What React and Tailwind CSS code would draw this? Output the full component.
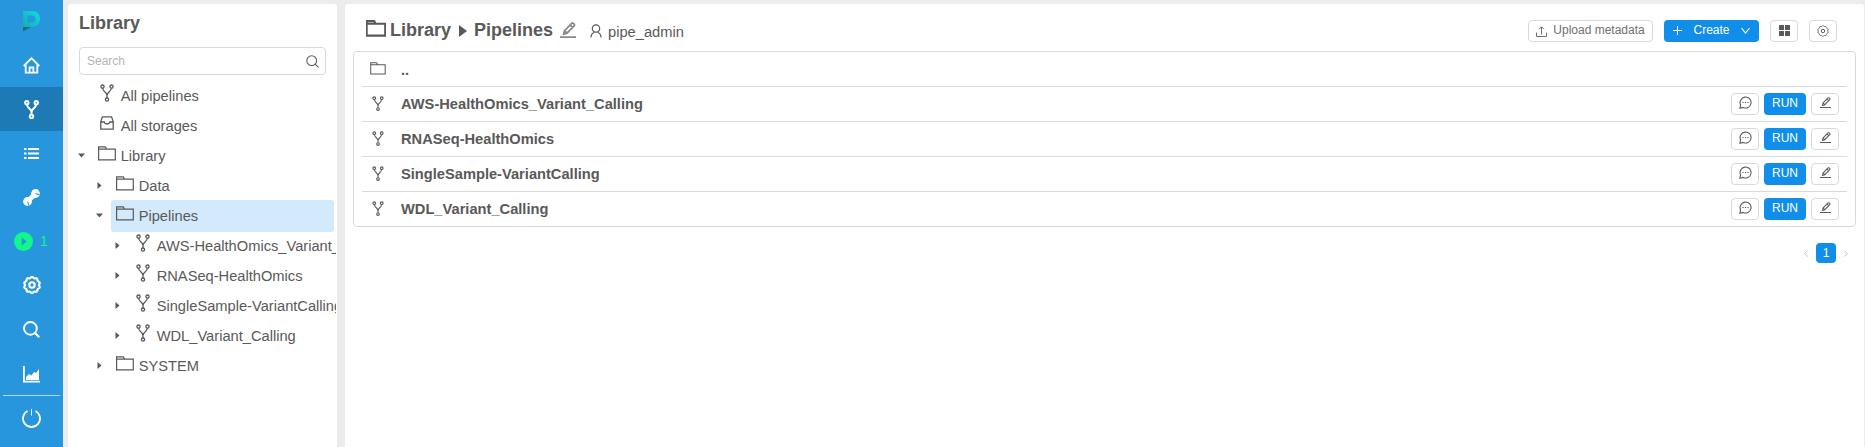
import React from "react";

const scallop = (c, r, a, n) => {
  const pts = [];
  for (let i = 0; i < 120; i++) {
    const t = (i / 120) * Math.PI * 2;
    const q = r + a * Math.cos(n * t);
    pts.push(`${(c + q * Math.sin(t)).toFixed(2)} ${(c - q * Math.cos(t)).toFixed(2)}`);
  }
  return `M${pts.join("L")}Z`;
};

function Svg({ w, h, vb, sw = 1, className = "", children }) {
  return (
    <svg
      width={w}
      height={h}
      viewBox={vb || `0 0 ${w} ${h}`}
      fill="none"
      stroke="currentColor"
      strokeWidth={sw}
      className={`block shrink-0 ${className}`}
    >
      {children}
    </svg>
  );
}

const Fork = ({ w = 14, h = 18, sw = 1.3, className }) => (
  <Svg w={w} h={h} vb="0 0 14 18" sw={sw} className={className}>
    <circle cx="2.5" cy="2.6" r="1.6" />
    <circle cx="11.5" cy="2.6" r="1.6" />
    <circle cx="7" cy="15.6" r="1.6" />
    <path d="M2.7 4.2C2.9 8 7 8.2 7 11.6V14M11.3 4.2C11.1 8 7 8.2 7 11.6" />
  </Svg>
);

const Folder = ({ w = 18, h = 15, sw = 1.2, className }) => (
  <Svg w={w} h={h} vb="0 0 18 15" sw={sw} className={className}>
    <path d="M.6 13.9V.9H7.4L8.6 3.2H17.3V13.9ZM.6 3.2H8.6" />
  </Svg>
);

const Storage = () => (
  <Svg w={14} h={14} sw={1.3}>
    <path d="M.8 5.5L2.4.8H11.6L13.2 5.5V13.2H.8ZM.8 6H4.2C4.5 7.2 5.6 8 7 8S9.5 7.2 9.8 6H13.2" />
  </Svg>
);

const Pencil = ({ s = 16, sw = 1, className }) => (
  <Svg w={s} h={s} vb="0 0 16 16" sw={sw} className={className}>
    <path d="M0 15.2H16M3.6 12.2L4.4 8.8L11.6 1.4Q12.5.6 13.4 1.4L14.1 2.1Q14.9 3 14.1 3.9L7 11.2ZM10.4 3L12.6 5.2M4.6 9L6.8 11" />
  </Svg>
);

const Gear = ({ s, sw, inner = 2, className }) => (
  <Svg w={s} h={s} vb="0 0 16 16" sw={sw} className={className}>
    <path d={scallop(8, 6.7, 0.45, 10)} />
    <circle cx="8" cy="8" r={inner} />
  </Svg>
);

const Search = ({ s, sw, className }) => (
  <Svg w={s} h={s} vb="0 0 16 16" sw={sw} className={className}>
    <circle cx="7" cy="7" r="6" />
    <path d="M11.3 11.3L15.3 15.3" />
  </Svg>
);

const Comment = () => (
  <Svg w={13} h={13} sw={1.1} className="relative -top-[2px]">
    <path d="M1.6 8.9A5.5 5.5 0 1 1 4 11.4L.9 12.2Z" />
    <path d="M3.4 6.5H4.6M5.9 6.5H7.1M8.4 6.5H9.6" />
  </Svg>
);

function Logo() {
  return (
    <svg width="18" height="21" viewBox="0 0 18 21" className="block">
      <defs>
        <linearGradient id="lg" x1="1" y1="0" x2="0" y2="1">
          <stop offset="0" stopColor="#10dce8" />
          <stop offset="1" stopColor="#18a9b4" />
        </linearGradient>
      </defs>
      <path
        d="M0 0H9C14 0 17 3.400 17 8S14 16 9 16H0ZM4.500 4.500V11.500H9C11 11.500 12.400 10.200 12.400 8S11 4.500 9 4.500Z"
        fill="url(#lg)"
        fillRule="evenodd"
      />
      <path d="M0 16H8L0 20.500Z" fill="#157083" />
    </svg>
  );
}

function NavItem({ active, children }) {
  return (
    <div
      className={`flex h-11 shrink-0 items-center justify-center text-white ${active ? "bg-[#1e7ab5]" : ""}`}
    >
      {children}
    </div>
  );
}

function Sidebar() {
  return (
    <nav className="flex w-[63px] shrink-0 flex-col bg-[#2796dd]">
      <div className="flex h-[43px] shrink-0 justify-center pt-[11px]">
        <Logo />
      </div>
      <NavItem>
        <Svg w={17} h={17} sw={1.8}>
          <path d="M.7 9L8.500 1.200L16.300 9M2.700 8V15.600H14.300V8M6.600 15.500V10.500H10.400V15.500" />
        </Svg>
      </NavItem>
      <NavItem active>
        <Fork w={15} h={19} sw={1.9} />
      </NavItem>
      <NavItem>
        <Svg w={15} h={13} sw={2}>
          <path d="M0 2H2.500M4 2H15M0 6.500H2.500M4 6.500H15M0 11H2.500M4 11H15" />
        </Svg>
      </NavItem>
      <NavItem>
        <Svg w={17} h={17}>
          <circle cx="12.500" cy="4.500" r="4.400" fill="currentColor" stroke="none" />
          <circle cx="4.500" cy="12.500" r="4.400" fill="currentColor" stroke="none" />
          <path d="M5 12L12 5" strokeWidth="5" />
          <path d="M12.600 4.600L16.600 5.800M4.600 12.600L5.800 16.600" stroke="#2796dd" strokeWidth="1.100" />
        </Svg>
      </NavItem>
      <div className="flex h-11 shrink-0 items-center gap-[7px] pl-[14px] text-[#11f78c]">
        <Svg w={19} h={19}>
          <circle cx="9.500" cy="9.500" r="9.500" fill="currentColor" stroke="none" />
          <path d="M7.700 5.500V13.500L12.800 9.500Z" fill="#2796dd" stroke="none" />
        </Svg>
        <span className="text-[14px] leading-none">1</span>
      </div>
      <NavItem>
        <Gear s={18} sw={1.9} inner={2.4} />
      </NavItem>
      <NavItem>
        <Search s={17} sw={1.8} />
      </NavItem>
      <NavItem>
        <Svg w={17} h={17} className="translate-y-px">
          <path d="M.9 0V15.700H17" strokeWidth="1.800" />
          <path d="M3 14V11L6 8L8.500 9.500L11 6L13 7L16 3V14Z" fill="currentColor" stroke="none" />
        </Svg>
      </NavItem>
      <div className="mx-[3px] h-px shrink-0 bg-[#b5dbf4]" />
      <NavItem>
        <Svg w={19} h={19} sw={1.8}>
          <path d="M5.500 2A8.500 8.500 0 1 0 13.500 2" />
          <path d="M9.500 0V6.500" strokeWidth="1" />
        </Svg>
      </NavItem>
    </nav>
  );
}

const tree = [
  { level: 0, icon: "fork", label: "All pipelines" },
  { level: 0, icon: "storage", label: "All storages" },
  { level: 0, icon: "folder", label: "Library", caret: "down" },
  { level: 1, icon: "folder", label: "Data", caret: "right" },
  { level: 1, icon: "folder", label: "Pipelines", caret: "down", selected: true },
  { level: 2, icon: "fork", label: "AWS-HealthOmics_Variant_Calling", caret: "right" },
  { level: 2, icon: "fork", label: "RNASeq-HealthOmics", caret: "right" },
  { level: 2, icon: "fork", label: "SingleSample-VariantCalling", caret: "right" },
  { level: 2, icon: "fork", label: "WDL_Variant_Calling", caret: "right" },
  { level: 1, icon: "folder", label: "SYSTEM", caret: "right" },
];
const indents = ["pl-1", "pl-[22px]", "pl-10"];

function TreeRow({ level, icon, label, caret, selected }) {
  return (
    <div className={`flex h-[30px] items-center pr-[2px] ${indents[level]}`}>
      <div className="flex w-[21px] shrink-0 justify-center pr-[3px] pb-[2px]">
        {caret === "down" && (
          <Svg w={7} h={5}>
            <path d="M0 .5H7L3.500 4.500Z" fill="currentColor" stroke="none" />
          </Svg>
        )}
        {caret === "right" && (
          <Svg w={5} h={7}>
            <path d="M.5 0V7L4.500 3.500Z" fill="currentColor" stroke="none" />
          </Svg>
        )}
      </div>
      <div
        className={`flex h-8 grow items-center rounded-[3px] pl-[5px] ${selected ? "bg-[#d2eafb]" : ""}`}
      >
        <div className="mr-[4.700px] flex w-[18px] shrink-0 justify-center pb-[6px]">
          {icon === "fork" && <Fork />}
          {icon === "storage" && <Storage />}
          {icon === "folder" && <Folder />}
        </div>
        <span className="text-[14.670px] whitespace-nowrap">{label}</span>
      </div>
    </div>
  );
}

function LibraryPanel() {
  return (
    <aside className="ml-[5px] mt-1 flex w-[269px] shrink-0 flex-col overflow-hidden rounded-t-[3px] bg-white">
      <h1 className="ml-[11px] mt-[7px] h-[25px] text-[18px] leading-[25px] font-bold">Library</h1>
      <div className="mx-[11px] mt-[11px] mb-[6px] flex h-7 items-center justify-between rounded-[4px] border border-[#d9d9d9] pr-[6px] pl-[7px]">
        <span className="text-[12px] text-[#b5b5b5]">Search</span>
        <Search s={13} sw={1.3} />
      </div>
      <div className="mr-px overflow-hidden">
        {tree.map((n) => (
          <TreeRow key={n.label} {...n} />
        ))}
      </div>
    </aside>
  );
}

const btn = "flex h-[22px] items-center justify-center rounded-[4px] text-[12px] leading-none";
const outline = "border border-[#d9d9d9] bg-white";

function PageHeader() {
  return (
    <header className="flex h-[47px] shrink-0 items-center pt-[6px] pr-[27px] pl-[21px]">
      <Folder w={20} h={17} sw={1.9} className="relative -top-[2px]" />
      <span className="ml-1 text-[18px] font-bold">Library</span>
      <Svg w={8} h={12} className="mr-[7px] ml-[8px]">
        <path d="M0 0V12L8 6Z" fill="currentColor" stroke="none" />
      </Svg>
      <span className="text-[18px] font-bold">Pipelines</span>
      <Pencil s={16} sw={1.7} className="relative -top-px ml-[7px] text-[#888]" />
      <Svg w={12} h={14} sw={1.2} className="ml-[14px] mt-px">
        <circle cx="6" cy="4.500" r="3.700" />
        <path d="M1 13.500C1 10.500 2.700 9 4.400 8.300M11 13.500C11 10.500 9.300 9 7.600 8.300" />
      </Svg>
      <span className="ml-[6px] pt-[2px] text-[14.670px]">pipe_admin</span>
      <div className="ml-auto flex gap-[11px]">
        <button className={`${btn} ${outline} w-[125px] gap-[6px] text-[#707070]`}>
          <Svg w={11} h={11} className="mt-px">
            <path d="M.5 6.500V10.500H10.500V6.500M5.500 8.500V1M3 3.300L5.500.8L8 3.300" />
          </Svg>
          <span className="relative -top-px">Upload metadata</span>
        </button>
        <button className={`${btn} w-[95px] bg-[#108ee9] text-white`}>
          <Svg w={9} h={9}>
            <path d="M4.500 0V9M0 4.500H9" />
          </Svg>
          <span className="relative -top-px mx-[11px]">Create</span>
          <Svg w={9} h={7} sw={1.2}>
            <path d="M.5 1L4.500 6L8.500 1" />
          </Svg>
        </button>
        <button className={`${btn} ${outline} w-7`}>
          <Svg w={11} h={11}>
            <path
              d="M.5 0H5V5H0V.5ZM6 0H10.500L11 .5V5H6ZM0 6H5V11H.5L0 10.500ZM6 6H11V10.500L10.500 11H6Z"
              fill="currentColor"
              stroke="none"
            />
          </Svg>
        </button>
        <button className={`${btn} ${outline} w-7`}>
          <Gear s={12} sw={1.3} inner={2.3} />
        </button>
      </div>
    </header>
  );
}

const pipelines = [
  "AWS-HealthOmics_Variant_Calling",
  "RNASeq-HealthOmics",
  "SingleSample-VariantCalling",
  "WDL_Variant_Calling",
];

function Content() {
  return (
    <main className="mr-px ml-2 mt-1 flex grow flex-col rounded-t-[3px] bg-white">
      <PageHeader />
      <div className="mr-2 ml-2 rounded-[4px] border border-[#d9d9d9] px-2">
        <div className="flex h-[34px] items-center">
          <div className="flex w-[32px] justify-center pb-px">
            <Folder w={16} h={13} />
          </div>
          <span className="ml-[7px] pt-px text-[14.670px] font-bold">..</span>
        </div>
        {pipelines.map((name) => (
          <div key={name} className="flex h-[35px] items-center border-t border-[#d9d9d9] pr-2">
            <div className="flex w-[32px] justify-center pb-px">
              <Fork w={12} h={15} sw={1.3} />
            </div>
            <span className="ml-[7px] text-[14.670px] font-bold">{name}</span>
            <div className="ml-auto flex gap-[5px]">
              <button className={`${btn} ${outline} w-7`}>
                <Comment />
              </button>
              <button className={`${btn} w-[42px] bg-[#108ee9] text-white`}>
                <span className="relative -top-px">RUN</span>
              </button>
              <button className={`${btn} ${outline} w-7`}>
                <Pencil s={11} sw={1.5} className="relative -top-[2px]" />
              </button>
            </div>
          </div>
        ))}
      </div>
      <div className="mt-4 flex items-center justify-end gap-2 pr-4 text-[#c4c4c4]">
        <Svg w={4} h={7}>
          <path d="M3.700.5L.6 3.500L3.700 6.500" />
        </Svg>
        <span className="flex h-5 w-5 items-center justify-center rounded-[4px] bg-[#108ee9] text-[12px] text-white">
          1
        </span>
        <Svg w={4} h={7}>
          <path d="M.3.5L3.400 3.500L.3 6.500" />
        </Svg>
      </div>
    </main>
  );
}

export default function App() {
  return (
    <div className="flex h-[447px] w-[1865px] overflow-hidden bg-[#ececec] font-['Liberation_Sans',Arial,sans-serif] text-[#595959]">
      <Sidebar />
      <LibraryPanel />
      <Content />
    </div>
  );
}
